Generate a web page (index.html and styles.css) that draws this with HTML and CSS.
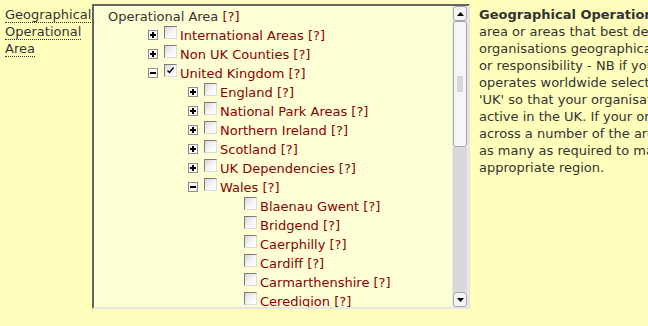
FILE: index.html
```html
<!DOCTYPE html>
<html lang="en">
<head>
  <meta charset="UTF-8" />
  <title>Operational Area</title>
  <link rel="stylesheet" href="styles.css">
</head>
<body>

  <div class="field">
    <div class="field-label"><abbr class="term" title="Geographical Operational Area">Geographical Operational Area</abbr></div>

    <div class="picker">
      <div class="tree">
        <div class="root">Operational Area <a class="help" href="#">[?]</a></div>
        <ul class="level">
          <li>
            <div class="row"><span class="toggle"><svg width="10" height="10" viewBox="0 0 10 10"><rect x="0.5" y="0.5" width="9" height="9" fill="#fbfbfb" stroke="#8c8c8c"/><path d="M2 4h6v2H2zM4 2h2v6H4z" fill="#000"/></svg></span><span class="cb"></span><span class="txt">International Areas <a class="help" href="#">[?]</a></span></div>
          </li>
          <li>
            <div class="row"><span class="toggle"><svg width="10" height="10" viewBox="0 0 10 10"><rect x="0.5" y="0.5" width="9" height="9" fill="#fbfbfb" stroke="#8c8c8c"/><path d="M2 4h6v2H2zM4 2h2v6H4z" fill="#000"/></svg></span><span class="cb"></span><span class="txt">Non UK Counties <a class="help" href="#">[?]</a></span></div>
          </li>
          <li>
            <div class="row"><span class="toggle"><svg width="10" height="10" viewBox="0 0 10 10"><rect x="0.5" y="0.5" width="9" height="9" fill="#fbfbfb" stroke="#8c8c8c"/><path d="M2 4h6v2H2z" fill="#000"/></svg></span><span class="cb checked"><svg width="11" height="11" viewBox="0 0 11 11"><path d="M2.5 5.5l2 2 4-5" fill="none" stroke="#000" stroke-width="1.4"/></svg></span><span class="txt">United Kingdom <a class="help" href="#">[?]</a></span></div>
            <ul class="level">
              <li><div class="row"><span class="toggle"><svg width="10" height="10" viewBox="0 0 10 10"><rect x="0.5" y="0.5" width="9" height="9" fill="#fbfbfb" stroke="#8c8c8c"/><path d="M2 4h6v2H2zM4 2h2v6H4z" fill="#000"/></svg></span><span class="cb"></span><span class="txt">England <a class="help" href="#">[?]</a></span></div></li>
              <li><div class="row"><span class="toggle"><svg width="10" height="10" viewBox="0 0 10 10"><rect x="0.5" y="0.5" width="9" height="9" fill="#fbfbfb" stroke="#8c8c8c"/><path d="M2 4h6v2H2zM4 2h2v6H4z" fill="#000"/></svg></span><span class="cb"></span><span class="txt">National Park Areas <a class="help" href="#">[?]</a></span></div></li>
              <li><div class="row"><span class="toggle"><svg width="10" height="10" viewBox="0 0 10 10"><rect x="0.5" y="0.5" width="9" height="9" fill="#fbfbfb" stroke="#8c8c8c"/><path d="M2 4h6v2H2zM4 2h2v6H4z" fill="#000"/></svg></span><span class="cb"></span><span class="txt">Northern Ireland <a class="help" href="#">[?]</a></span></div></li>
              <li><div class="row"><span class="toggle"><svg width="10" height="10" viewBox="0 0 10 10"><rect x="0.5" y="0.5" width="9" height="9" fill="#fbfbfb" stroke="#8c8c8c"/><path d="M2 4h6v2H2zM4 2h2v6H4z" fill="#000"/></svg></span><span class="cb"></span><span class="txt">Scotland <a class="help" href="#">[?]</a></span></div></li>
              <li><div class="row"><span class="toggle"><svg width="10" height="10" viewBox="0 0 10 10"><rect x="0.5" y="0.5" width="9" height="9" fill="#fbfbfb" stroke="#8c8c8c"/><path d="M2 4h6v2H2zM4 2h2v6H4z" fill="#000"/></svg></span><span class="cb"></span><span class="txt">UK Dependencies <a class="help" href="#">[?]</a></span></div></li>
              <li>
                <div class="row"><span class="toggle"><svg width="10" height="10" viewBox="0 0 10 10"><rect x="0.5" y="0.5" width="9" height="9" fill="#fbfbfb" stroke="#8c8c8c"/><path d="M2 4h6v2H2z" fill="#000"/></svg></span><span class="cb"></span><span class="txt">Wales <a class="help" href="#">[?]</a></span></div>
                <ul class="level">
                  <li><div class="row"><span class="toggle"></span><span class="cb"></span><span class="txt">Blaenau Gwent <a class="help" href="#">[?]</a></span></div></li>
                  <li><div class="row"><span class="toggle"></span><span class="cb"></span><span class="txt">Bridgend <a class="help" href="#">[?]</a></span></div></li>
                  <li><div class="row"><span class="toggle"></span><span class="cb"></span><span class="txt">Caerphilly <a class="help" href="#">[?]</a></span></div></li>
                  <li><div class="row"><span class="toggle"></span><span class="cb"></span><span class="txt">Cardiff <a class="help" href="#">[?]</a></span></div></li>
                  <li><div class="row"><span class="toggle"></span><span class="cb"></span><span class="txt">Carmarthenshire <a class="help" href="#">[?]</a></span></div></li>
                  <li><div class="row"><span class="toggle"></span><span class="cb"></span><span class="txt">Ceredigion <a class="help" href="#">[?]</a></span></div></li>
                </ul>
              </li>
            </ul>
          </li>
        </ul>
      </div>

      <div class="scrollbar">
        <div class="sb-btn"><svg width="7" height="4" viewBox="0 0 7 4"><path d="M0 4L3.5 0 7 4z" fill="#000"/></svg></div>
        <div class="sb-thumb"><span class="grip"></span></div>
        <div class="sb-track"></div>
        <div class="sb-btn"><svg width="7" height="4" viewBox="0 0 7 4"><path d="M0 0h7L3.5 4z" fill="#000"/></svg></div>
      </div>
    </div>

    <p class="desc">
      <b>Geographical Operational Area</b> - Select the<br>
      area or areas that best describe your<br>
      organisations geographical area of operation<br>
      or responsibility - NB if your organisation<br>
      operates worldwide select 'International' and<br>
      'UK' so that your organisation also appears as<br>
      active in the UK. If your organisation operates<br>
      across a number of the areas listed select<br>
      as many as required to make sure it is in the<br>
      appropriate region.
    </p>
  </div>

</body>
</html>
```

FILE: styles.css
```css
html, body { overflow: hidden; }
body {
  margin: 0;
  background-color: #ffffbb;
  font-family: "DejaVu Sans", Verdana, sans-serif;
  font-size: 13px;
  color: #333;
}
a { color: #8b0000; text-decoration: none; }

.field {
  display: flex;
  align-items: flex-start;
  white-space: nowrap;
}

.field-label {
  flex: none;
  width: 82px;
  padding: 6px 0 0 5px;
  line-height: 17px;
  white-space: normal;
}
.term {
  text-decoration: none;
  border-bottom: 1px dotted #333;
}

/* tree box */
.picker {
  flex: none;
  display: flex;
  width: 374px;
  height: 301px;
  margin: 4px 0 0 5px;
  border: 2px solid;
  border-color: #646464 #e4e4e4 #e4e4e4 #646464;
  background-color: #ffffd6;
}
.tree {
  flex: 1;
  overflow: hidden;
  padding: 1px 0 0 14px;
}
.root { height: 19px; line-height: 19px; }
.level {
  list-style: none;
  margin: 0;
  padding: 0 0 0 40px;
}
.row {
  display: flex;
  align-items: flex-start;
  height: 19px;
  line-height: 19px;
}
.toggle {
  width: 16px;
  height: 10px;
  margin-top: 4px;
  flex: none;
}
.toggle svg { display: block; }
.cb {
  flex: none;
  width: 11px;
  height: 11px;
  margin-right: 3px;
  border: 1px solid;
  border-color: #7c7c7c #dcdcdc #dcdcdc #7c7c7c;
  background: linear-gradient(135deg, #d6d6d6, #f4f4f4 50%, #fff);
}
.cb svg { display: block; }
.txt { color: #8b0000; }

/* scrollbar */
.scrollbar {
  flex: none;
  width: 16px;
  display: flex;
  flex-direction: column;
  background-color: #e9e9e9;
}
.sb-btn {
  flex: none;
  height: 13px;
  margin: 0 1px;
  border: 1px solid #a6a6a6;
  border-radius: 3px;
  background-color: #f4f4f4;
  display: flex;
  align-items: center;
  justify-content: center;
}
.sb-thumb {
  flex: none;
  height: 124px;
  margin: 0 1px;
  border: 1px solid #a6a6a6;
  border-radius: 3px;
  background-color: #f6f6f6;
  display: flex;
  align-items: center;
  justify-content: center;
}
.grip {
  width: 6px;
  height: 16px;
  background-image: radial-gradient(circle, #b4b4b4 0.6px, transparent 0.8px);
  background-size: 2px 2px;
}
.sb-track {
  flex: 1;
  background-color: #d8d8d8;
  margin: 0 1px;
}

/* help text */
.desc {
  margin: 6px 0 0 9px;
  line-height: 17px;
}
```
